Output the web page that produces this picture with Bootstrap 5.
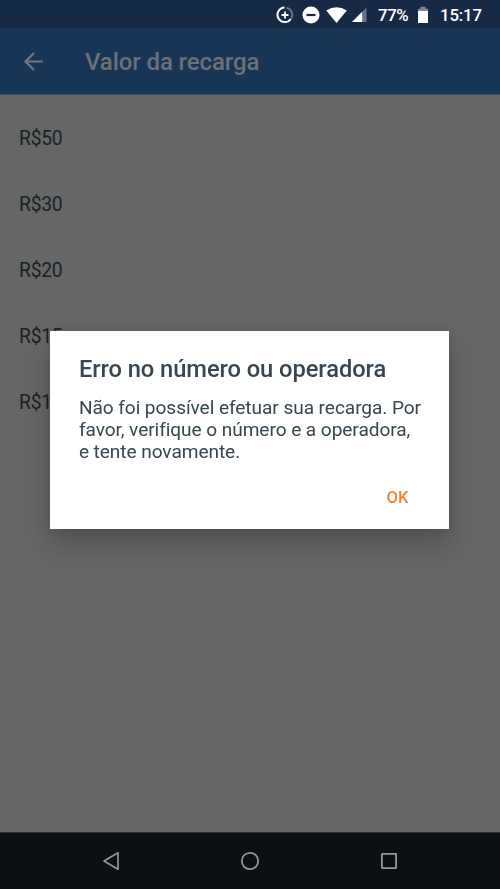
<!DOCTYPE html>
<html lang="pt-BR">
<head>
<meta charset="utf-8">
<meta name="viewport" content="width=device-width, initial-scale=1">
<title>Valor da recarga</title>
<link href="https://cdn.jsdelivr.net/npm/bootstrap@5.3.0/dist/css/bootstrap.min.css" rel="stylesheet">
<style>
  body { font-family: Roboto, "Liberation Sans", sans-serif; background: #666; color: #182326; height: 889px; overflow: hidden; }
  svg { display: block; flex: none; }
  .status { height: 28px; background: #162945; color: #fff; font-size: 16.8px; font-weight: 500; letter-spacing: -.15px; padding-left: 276px; line-height: 26px; padding-top: 1px; }
  .status .percent { margin-left: 11px; width: 40px; white-space: nowrap; letter-spacing: -.4px; }
  .status .clock { margin-left: 11px; }
  .status .gap-s { margin-left: 5.5px; }
  .status .gap-m { margin-left: 8px; }
  .topbar { height: 67px; background: #173555; color: #6c7175; padding-left: 23px; border-bottom: 1px solid #3d4c5a; }
  .topbar h1 { font-size: 24px; font-weight: 500; letter-spacing: -.1px; margin: 2px 0 0 41px; line-height: 28px; }
  .values { padding: 11px 0 0 19px; }
  .values li { height: 66.2px; font-size: 19.3px; letter-spacing: -.25px; }
  .softkeys { height: 57px; background: #0b1113; padding: 0 102px; border-top: 1px solid #303436; }
  .modal.show { padding-top: 331px; }
  .modal-dialog.error-box { width: 399px; max-width: none; margin: 0 0 0 50.4px; }
  .error-box .modal-content { height: 198.3px; color: #37474f; background: #fff; box-shadow: 0 16px 26px rgba(0,0,0,.2), 0 0 10px rgba(0,0,0,.1); padding: 24px 28px 0 28.5px; }
  .error-box h2 { font-size: 23.7px; font-weight: 500; line-height: 28px; letter-spacing: -.06px; margin: 0 0 13.6px; white-space: nowrap; }
  .error-box p { font-size: 19.1px; line-height: 22.2px; letter-spacing: -.07px; white-space: nowrap; margin: 0; }
  .ok-btn { color: #f08530; font-size: 16.6px; font-weight: 500; line-height: 20px; margin: 24.4px 13px 0 0; }
</style>
</head>
<body class="d-flex flex-column">
<header>
  <div class="status d-flex align-items-center">
    <svg width="18" height="18" viewBox="0 0 18 18" fill="none" stroke="#fff" stroke-width="2"><path d="M8.5 1.5A7.3 7.3 0 1 0 14.8 13"/><path d="M10.5 1.7A7.3 7.3 0 0 1 15.2 12.5" stroke="#64728a"/><path d="M9 5.5v7M5.5 9h7" stroke-width="1.8"/></svg>
    <svg class="gap-m" width="18" height="18" viewBox="0 0 18 18"><circle cx="9" cy="9" r="8.5" fill="#fff"/><path d="M4.5 9h9" stroke="#162945" stroke-width="2.2"/></svg>
    <svg class="gap-s" width="21" height="18" viewBox="0 0 21 18"><path d="M.2 4.4Q10.5-2.1 20.8 4.4L10.5 17Z" fill="#fff"/></svg>
    <svg class="gap-s" width="15" height="18" viewBox="0 0 15 18"><path d="M0 16 14.5 1.5V16Z" fill="#64728a"/><path d="M0 16 10.2 5.8V16Z" fill="#fff"/></svg>
    <span class="percent">77%</span>
    <svg width="11" height="18" viewBox="0 0 11 18"><path d="M2.5 .8h5v2H10V6H0V2.8h2.5Z" fill="#7b879a"/><path d="M0 5h10v12H0Z" fill="#fff"/></svg>
    <span class="clock">15:17</span>
  </div>
  <nav class="topbar d-flex align-items-center" aria-label="Valor da recarga">
    <svg width="21" height="21" viewBox="0 0 21 21" fill="none" stroke="#71777b" stroke-width="2.2"><path d="M19.8 10.5H2.5M11 2 2.5 10.5 11 19"/></svg>
    <h1>Valor da recarga</h1>
  </nav>
</header>
<main class="flex-grow-1">
  <ul class="values list-unstyled mb-0">
    <li class="d-flex align-items-center">R$50</li>
    <li class="d-flex align-items-center">R$30</li>
    <li class="d-flex align-items-center">R$20</li>
    <li class="d-flex align-items-center">R$15</li>
    <li class="d-flex align-items-center">R$10</li>
  </ul>
</main>
<footer class="softkeys d-flex align-items-center justify-content-between">
  <svg width="18" height="20" viewBox="0 0 18 20" fill="none" stroke="#92979a" stroke-width="1.7" stroke-linejoin="round"><path d="M16 1.8v16.4L2 10Z"/></svg>
  <svg width="20" height="20" viewBox="0 0 20 20" fill="none" stroke="#92979a" stroke-width="1.8"><circle cx="10" cy="10" r="8.2"/></svg>
  <svg width="18" height="18" viewBox="0 0 18 18" fill="none" stroke="#92979a" stroke-width="1.8"><rect x="1.9" y="1.9" width="14.2" height="14.2" rx=".4"/></svg>
</footer>
<div class="modal show d-block overflow-hidden" role="alertdialog" aria-labelledby="error-title">
  <div class="modal-dialog error-box">
    <div class="modal-content border-0 rounded-0">
      <h2 id="error-title">Erro no número ou operadora</h2>
      <p>Não foi possível efetuar sua recarga. Por<br>favor, verifique o número e a operadora,<br>e tente novamente.</p>
      <button type="button" class="ok-btn btn border-0 p-0 align-self-end">OK</button>
    </div>
  </div>
</div>
<script src="https://cdn.jsdelivr.net/npm/bootstrap@5.3.0/dist/js/bootstrap.bundle.min.js"></script>
</body>
</html>
